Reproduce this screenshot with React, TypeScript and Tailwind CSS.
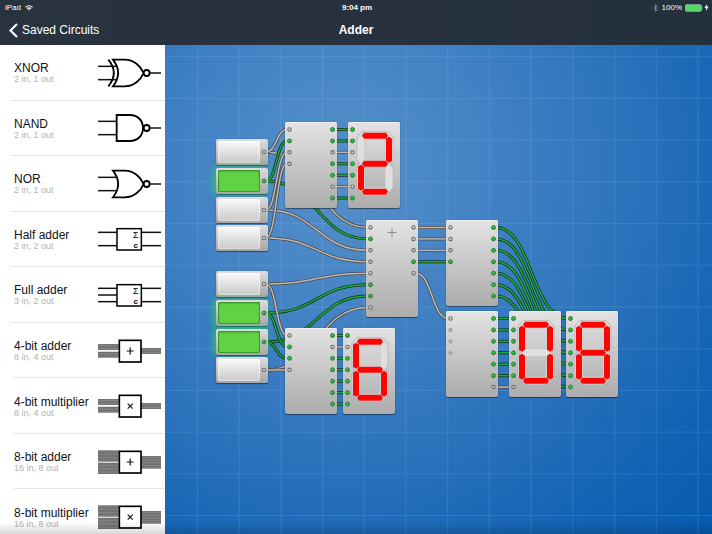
import React, { useState } from "react";

type Level = "on" | "off" | "idle";

const NODE_W = 52;
const PIN_TOP = 7.5;
const PIN_PITCH = 80 / 7;

const pinY = (i: number) => PIN_TOP + i * PIN_PITCH;

/* ---------- Component library ---------- */

function Leads({ ys, from, to }: { ys: number[]; from: number; to: number }) {
  return (
    <>
      {ys.map((y) => (
        <line key={y} x1={from} x2={to} y1={y} y2={y} stroke="#111" strokeWidth="4.5" />
      ))}
    </>
  );
}

function Bubble() {
  return (
    <>
      <circle cx="146" cy="51" r="9" fill="#fff" stroke="#000" strokeWidth="5.5" />
      <Leads ys={[51]} from={155} to={189} />
    </>
  );
}

const OR_BODY = "M45 11 Q76 51 45 91 H80 C108 91 128 72 137 51 C128 30 108 11 80 11 Z";

function Xnor() {
  return (
    <>
      <path d="M31 11 Q64 51 31 91" fill="none" stroke="#000" strokeWidth="5.5" />
      <path d={OR_BODY} fill="none" stroke="#000" strokeWidth="5.5" />
      <Leads ys={[31, 71]} from={0} to={56} />
      <Bubble />
    </>
  );
}

function Nor() {
  return (
    <>
      <path d={OR_BODY} fill="none" stroke="#000" strokeWidth="5.5" />
      <Leads ys={[31, 71]} from={0} to={56} />
      <Bubble />
    </>
  );
}

function Nand() {
  return (
    <>
      <path
        d="M56 12 H95 C120 12 135 29 135 51 C135 73 120 90 95 90 H56 Z"
        fill="none"
        stroke="#000"
        strokeWidth="5.5"
      />
      <Leads ys={[31, 71]} from={0} to={56} />
      <Bubble />
    </>
  );
}

function SumBox({ inputs }: { inputs: number[] }) {
  return (
    <>
      <Leads ys={inputs} from={0} to={57} />
      <Leads ys={[31, 71]} from={130} to={189} />
      <rect x="57" y="20" width="73" height="64" fill="#fff" stroke="#000" strokeWidth="4.5" />
      <text x="113" y="49" textAnchor="middle" fontSize="27" fontFamily="Liberation Sans, sans-serif">
        Σ
      </text>
      <text x="113" y="78" textAnchor="middle" fontSize="24" fontWeight="bold" fontFamily="Liberation Sans, sans-serif">
        c
      </text>
    </>
  );
}

function Bundle({ x, y, w, h, lines }: { x: number; y: number; w: number; h: number; lines: number }) {
  const step = h / lines;
  return (
    <>
      <rect x={x} y={y} width={w} height={h} fill="#8c8c8c" />
      {Array.from({ length: lines }, (_, i) => (
        <rect key={i} x={x} y={y + i * step + step / 4} width={w} height={step / 2} fill="#666" />
      ))}
    </>
  );
}

function OpBox({ op, bits }: { op: "+" | "×"; bits: 4 | 8 }) {
  return (
    <>
      {bits === 4 ? (
        <>
          <Bundle x={0} y={30} w={62} h={18} lines={4} />
          <Bundle x={0} y={53} w={62} h={18} lines={4} />
          <Bundle x={130} y={42} w={59} h={18} lines={4} />
        </>
      ) : (
        <>
          <Bundle x={0} y={16} w={62} h={34} lines={8} />
          <Bundle x={0} y={53} w={62} h={34} lines={8} />
          <Bundle x={130} y={33} w={59} h={38} lines={8} />
        </>
      )}
      <rect x="64" y="19" width="65" height="65" fill="#fff" stroke="#000" strokeWidth="5" />
      {op === "+" ? (
        <path d="M86 51 H107 M96.5 40.5 V61.5" stroke="#111" strokeWidth="3.6" />
      ) : (
        <path d="M89 44 L104 59 M104 44 L89 59" stroke="#111" strokeWidth="3.6" />
      )}
    </>
  );
}

const LIBRARY: { name: string; pins: string; inset: string; art: React.ReactNode }[] = [
  { name: "XNOR", pins: "2 in, 1 out", inset: "left-[11px]", art: <Xnor /> },
  { name: "NAND", pins: "2 in, 1 out", inset: "left-[11px]", art: <Nand /> },
  { name: "NOR", pins: "2 in, 1 out", inset: "left-[11px]", art: <Nor /> },
  { name: "Half adder", pins: "2 in, 2 out", inset: "left-[11px]", art: <SumBox inputs={[31, 71]} /> },
  { name: "Full adder", pins: "3 in, 2 out", inset: "left-[11px]", art: <SumBox inputs={[31, 51, 71]} /> },
  { name: "4-bit adder", pins: "8 in, 4 out", inset: "left-[14px]", art: <OpBox op="+" bits={4} /> },
  { name: "4-bit multiplier", pins: "8 in, 4 out", inset: "left-[14px]", art: <OpBox op="×" bits={4} /> },
  { name: "8-bit adder", pins: "16 in, 8 out", inset: "left-[14px]", art: <OpBox op="+" bits={8} /> },
  { name: "8-bit multiplier", pins: "16 in, 8 out", inset: "left-[14px]", art: <OpBox op="×" bits={8} /> },
];

function Library() {
  return (
    <aside className="relative w-[165px] shrink-0 overflow-hidden bg-white">
      <ul className="grid h-[500px] grid-rows-9">
        {LIBRARY.map((part) => (
          <li key={part.name} className="relative">
            <button type="button" className="flex h-full w-full items-center justify-between pr-1 pl-[14px] text-left">
              <span className="flex flex-col whitespace-nowrap">
                <span className="text-[12px] leading-[14px] text-[#111]">{part.name}</span>
                <span className="text-[9px] leading-[9px] text-[#b2b2b2]">{part.pins}</span>
              </span>
              <svg viewBox="0 0 189 102" className="-ml-4 h-[34px] w-[63px] shrink-0" aria-hidden="true">
                {part.art}
              </svg>
            </button>
            <span className={`absolute right-0 bottom-0 h-px bg-[#e4e4e4] ${part.inset}`} />
          </li>
        ))}
      </ul>
    </aside>
  );
}

/* ---------- Circuit nodes ---------- */

function Pin({ x, y, level }: { x: number; y: number; level: Level }) {
  if (level === "idle") return <circle cx={x} cy={y} r="1.9" fill="#a9a9a9" stroke="#999" strokeWidth="0.5" />;
  if (level === "on")
    return (
      <>
        <circle cx={x} cy={y} r="2" fill="#12bb2b" stroke="#3d6b45" strokeWidth="0.9" />
        <circle cx={x - 0.4} cy={y - 0.5} r="0.7" fill="#3fe257" />
      </>
    );
  return <circle cx={x} cy={y} r="1.7" fill="#d6d6d6" stroke="#6c6c6c" strokeWidth="1.1" />;
}

const toLevels = (code: string): Level[] =>
  code.split("").map((c) => (c === "1" ? "on" : c === "0" ? "off" : "idle"));

type Segment = { id: string; x: number; y: number; vertical: boolean };

const SEGMENTS: Segment[] = [
  { id: "a", x: 81, y: 41, vertical: false },
  { id: "b", x: 123, y: 83, vertical: true },
  { id: "c", x: 123, y: 167, vertical: true },
  { id: "d", x: 81, y: 209, vertical: false },
  { id: "e", x: 39, y: 167, vertical: true },
  { id: "f", x: 39, y: 83, vertical: true },
  { id: "g", x: 81, y: 125, vertical: false },
];

function Digit({ lit }: { lit: string }) {
  return (
    <g transform="scale(0.3333)">
      <path
        d="M42 29 H120 L135 44 V113 L129 125 L135 137 V206 L120 221 H42 L27 206 V137 L33 125 L27 113 V44 Z"
        fill="none"
        stroke="#b0b0b0"
        strokeWidth="2.5"
      />
      {SEGMENTS.map((s) => (
        <g key={s.id} transform={`translate(${s.x} ${s.y})${s.vertical ? " rotate(90)" : ""}`}>
          <path d="M-42 0 L-30 -11.5 H30 L42 0 L30 11.5 H-30 Z" fill="#dfdfdf" stroke="#c2c2c2" strokeWidth="1.5" />
          {lit.includes(s.id) && (
            <path d="M-39 0 L-33 -9 H33 L39 0 L33 9 H-33 Z" fill="#ff0303" />
          )}
        </g>
      ))}
    </g>
  );
}

type ChipData = {
  id: string;
  x: number;
  y: number;
  ins: string;
  outs: string;
  lit?: string;
  plus?: boolean;
};

const CHIPS: ChipData[] = [
  { id: "decoder-a", x: 120, y: 77, ins: "0100", outs: "1101101" },
  { id: "display-a", x: 183, y: 77, ins: "1101101", outs: "", lit: "abged" },
  { id: "adder", x: 201, y: 175, ins: "01000110", outs: "00010", plus: true },
  { id: "decoder-low", x: 281, y: 175, ins: "0001", outs: "1111111" },
  { id: "decoder-high", x: 281, y: 266, ins: "0---", outs: "1111110" },
  { id: "display-high", x: 344, y: 266, ins: "1111110", outs: "", lit: "abcdef" },
  { id: "display-low", x: 401, y: 266, ins: "1111111", outs: "", lit: "abcdefg" },
  { id: "decoder-b", x: 120, y: 283, ins: "0110", outs: "1011111" },
  { id: "display-b", x: 178, y: 283, ins: "1011111", outs: "", lit: "acdefg" },
];

function Chip({ chip }: { chip: ChipData }) {
  return (
    <div
      className={`absolute w-[52px] rounded-[2px] bg-linear-to-b from-[#e3e3e3] to-[#acacac] shadow-[0_1px_1px_rgba(0,0,0,0.45),0_0_1px_rgba(0,0,0,0.4),inset_0_1px_0_#f0f0f0] ${
        chip.plus ? "h-[97px]" : "h-[86px]"
      }`}
      style={{ left: chip.x, top: chip.y }}
    >
      <svg className="block h-full w-full" aria-label={chip.id}>
        {chip.lit && <Digit lit={chip.lit} />}
        {chip.plus && <path d="M21.5 12.5 H30.5 M26 8 V17" stroke="#8e8e8e" strokeWidth="1" />}
        {toLevels(chip.ins).map((level, i) => (
          <Pin key={`i${i}`} x={4.5} y={pinY(i)} level={level} />
        ))}
        {toLevels(chip.outs).map((level, i) => (
          <Pin key={`o${i}`} x={47.5} y={pinY(i)} level={level} />
        ))}
      </svg>
    </div>
  );
}

const SWITCH_X = 51;
const SWITCHES = [
  { y: 94, on: false },
  { y: 123, on: true },
  { y: 152, on: false },
  { y: 180, on: false },
  { y: 226, on: false },
  { y: 255, on: true },
  { y: 284, on: true },
  { y: 312, on: false },
];

function InputSwitch({ y, initial, label }: { y: number; initial: boolean; label: string }) {
  const [on, setOn] = useState(initial);
  return (
    <div
      className={`absolute flex h-[26px] w-[52px] items-center rounded-[2px] bg-linear-to-b from-[#dedede] to-[#a6a6a6] pl-[2px] ${
        on
          ? "shadow-[0_1px_1px_rgba(0,0,0,0.4),-2px_0_7px_0_rgba(30,225,90,0.8)]"
          : "shadow-[0_1px_1px_rgba(0,0,0,0.45),0_0_1px_rgba(0,0,0,0.4)]"
      }`}
      style={{ left: SWITCH_X, top: y }}
    >
      <button
        type="button"
        role="switch"
        aria-checked={on}
        aria-label={label}
        onClick={() => setOn(!on)}
        className={`h-[22px] w-[42px] rounded-[2px] ${
          on
            ? "bg-[#60d243] shadow-[inset_0_0_0_1px_#3c9a2c,inset_0_1px_2px_#2f7d24]"
            : "bg-linear-to-b from-[#fafafa] to-[#c9c9c9] shadow-[inset_0_0_2px_1px_rgba(255,255,255,0.45)]"
        }`}
      />
      <svg className="h-[26px] w-2 shrink-0" aria-hidden="true">
        <Pin x={4} y={13} level={on ? "on" : "off"} />
      </svg>
    </div>
  );
}

/* ---------- Wires ---------- */

type WireData = { x1: number; y1: number; x2: number; y2: number; on: boolean };

const chipById = (id: string) => CHIPS.find((c) => c.id === id) as ChipData;

function link(from: string, out: number, to: string, input: number): WireData {
  const a = chipById(from);
  const b = chipById(to);
  return {
    x1: a.x + NODE_W - 2,
    y1: a.y + pinY(out),
    x2: b.x + 2,
    y2: b.y + pinY(input),
    on: a.outs[out] === "1",
  };
}

function linkSwitch(index: number, to: string, input: number): WireData {
  const s = SWITCHES[index];
  const b = chipById(to);
  return { x1: SWITCH_X + NODE_W - 2, y1: s.y + 13, x2: b.x + 2, y2: b.y + pinY(input), on: s.on };
}

const range = (n: number) => Array.from({ length: n }, (_, i) => i);

const WIRES: WireData[] = [
  ...range(8).map((i) => linkSwitch(i, "adder", i)),
  ...range(4).map((i) => linkSwitch(i, "decoder-a", i)),
  ...range(4).map((i) => linkSwitch(i + 4, "decoder-b", i)),
  ...range(7).map((i) => link("decoder-a", i, "display-a", i)),
  ...range(7).map((i) => link("decoder-b", i, "display-b", i)),
  ...range(4).map((i) => link("adder", i, "decoder-low", i)),
  link("adder", 4, "decoder-high", 0),
  ...range(7).map((i) => link("decoder-low", i, "display-low", i)),
  ...range(7).map((i) => link("decoder-high", i, "display-high", i)),
];

function Wire({ x1, y1, x2, y2, on }: WireData) {
  const mid = (x1 + x2) / 2;
  const d = `M${x1} ${y1} C${mid} ${y1} ${mid} ${y2} ${x2} ${y2}`;
  return (
    <g fill="none">
      <path d={d} stroke={on ? "#10301b" : "#4a4a4a"} strokeWidth="3" />
      <path d={d} stroke={on ? "#1cae34" : "#bebab3"} strokeWidth="1.5" />
    </g>
  );
}

function Canvas() {
  return (
    <main className="relative min-w-0 flex-1 overflow-hidden bg-[radial-gradient(circle_at_175px_125px,#5690ca_0px,#4684c5_130px,#2f75bd_270px,#1765b5_400px,#0459ae_530px)]">
      <svg className="absolute inset-0 h-full w-full" aria-hidden="true">
        <defs>
          <pattern id="grid" x="32" y="11.3" width="41.7" height="41.7" patternUnits="userSpaceOnUse">
            <path d="M0.5 0 V41.7 M0 0.5 H41.7" stroke="#a8d4ff" strokeOpacity="0.15" strokeWidth="1" />
          </pattern>
        </defs>
        <rect width="100%" height="100%" fill="url(#grid)" />
        {WIRES.map((w, i) => (
          <Wire key={i} {...w} />
        ))}
      </svg>
      {SWITCHES.map((s, i) => (
        <InputSwitch key={s.y} y={s.y} initial={s.on} label={`Input ${i + 1}`} />
      ))}
      {CHIPS.map((chip) => (
        <Chip key={chip.id} chip={chip} />
      ))}
    </main>
  );
}

/* ---------- Header ---------- */

function StatusBar() {
  return (
    <div className="grid h-[15px] grid-cols-[1fr_auto_1fr] items-center pr-[3px] pl-[5px] text-[8px] leading-[10px]">
      <div className="flex items-center gap-1">
        <span>iPad</span>
        <svg viewBox="0 0 16 12" className="h-[6px] w-2" fill="none" stroke="#fff" strokeWidth="2.2" aria-label="Wi-Fi">
          <path d="M1 4.5 Q8 -1.5 15 4.5" />
          <path d="M4 7.5 Q8 4 12 7.5" />
          <path d="M6 9 L8 11.5 L10 9 Q8 7.8 6 9 Z" fill="#fff" stroke="none" />
        </svg>
      </div>
      <span className="font-bold">9:04 pm</span>
      <div className="flex items-center justify-end">
        <svg viewBox="0 0 10 16" className="mr-1 h-2 w-[5px]" fill="none" stroke="#8c949c" strokeWidth="1.5" aria-label="Bluetooth">
          <path d="M1 4.5 L9 11.5 L5 15 V1 L9 4.5 L1 11.5" />
        </svg>
        <span>100%</span>
        <svg viewBox="0 0 54 24" className="ml-[3px] h-2 w-[18px]" aria-label="Battery">
          <rect x="1" y="2" width="48" height="20" rx="3" fill="#4cd964" stroke="#b9c4c4" strokeWidth="2" />
          <path d="M50.5 8 Q54 12 50.5 16 Z" fill="#fff" />
        </svg>
        <svg viewBox="0 0 12 20" className="ml-px h-[7px] w-[5px]" aria-label="Charging">
          <path d="M8 0 L0 11 H5 L4 20 L12 8 H7 Z" fill="#fff" />
        </svg>
      </div>
    </div>
  );
}

function Header() {
  return (
    <header className="h-[45px] shrink-0 bg-linear-to-r from-[#29333f] to-[#24303b] text-white">
      <StatusBar />
      <nav className="grid h-[30px] grid-cols-[1fr_auto_1fr] items-center px-[9px]">
        <button type="button" className="flex items-center gap-[4px] justify-self-start text-[12px] leading-[14px]">
          <svg viewBox="0 0 9 15" className="h-[15px] w-[9px]" fill="none" stroke="#fff" strokeWidth="2.2" aria-hidden="true">
            <path d="M8 1 L1.5 7.5 L8 14" />
          </svg>
          Saved Circuits
        </button>
        <h1 className="text-[12px] leading-[14px] font-bold">Adder</h1>
      </nav>
    </header>
  );
}

export default function App() {
  return (
    <div className="relative flex h-screen flex-col overflow-hidden font-['Liberation_Sans',Arial,sans-serif]">
      <Header />
      <div className="flex min-h-0 flex-1">
        <Library />
        <Canvas />
      </div>
      <div className="pointer-events-none absolute inset-x-0 bottom-0 h-3 bg-linear-to-b from-transparent to-black/15" />
    </div>
  );
}
